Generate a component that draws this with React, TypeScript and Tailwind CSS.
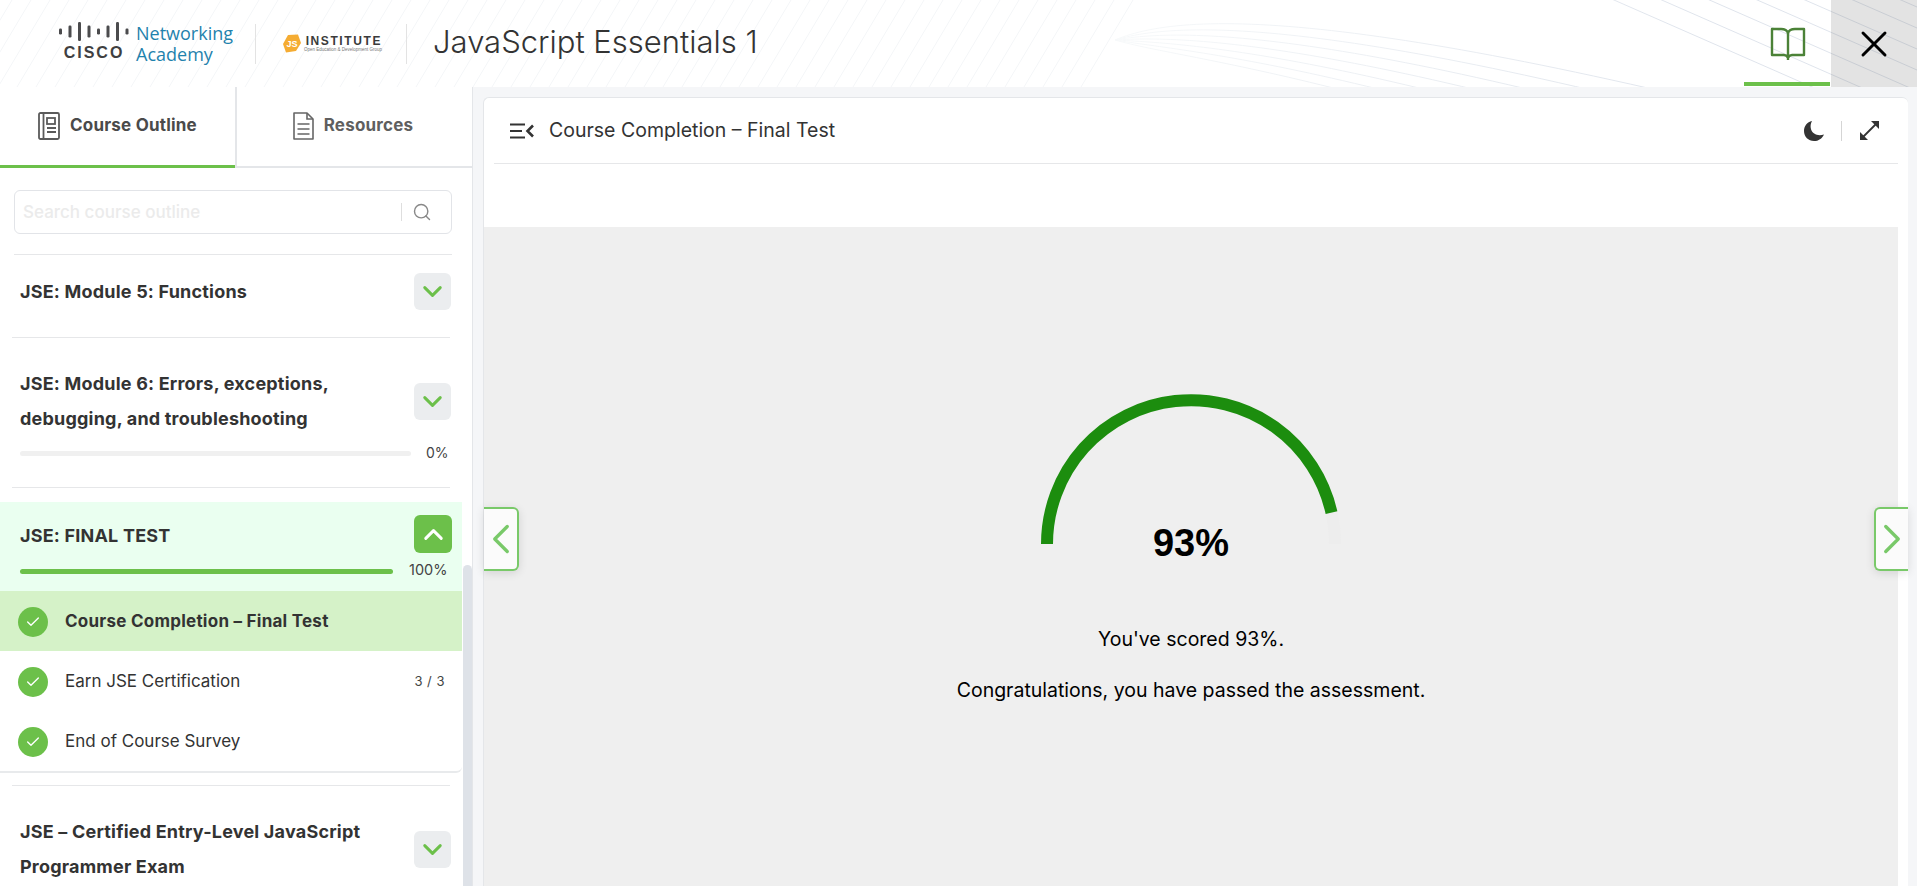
import { Check, ChevronDown, ChevronLeft, ChevronRight, ChevronUp, Search, X } from 'lucide-react';

const diagonals = Array.from({ length: 60 }, (_, i) => i * 19 - 40);
const topLines = Array.from({ length: 7 }, (_, i) => 7 + i * 21);
const arcs = Array.from({ length: 7 }, (_, i) => i);

function HeaderWaves() {
  return (
    <svg className="absolute inset-0 h-full w-full" viewBox="0 0 1917 87" fill="none">
      <defs>
        <linearGradient id="wave" gradientUnits="userSpaceOnUse" x1="1115" y1="0" x2="1700" y2="0">
          <stop offset="0" stopColor="#f7f9fa" />
          <stop offset="1" stopColor="#dfe4ec" />
        </linearGradient>
      </defs>
      {diagonals.map((x) => (
        <path key={x} d={`M${x} 87 L${x + 52} 0`} stroke="#f4f6f8" strokeWidth="1" />
      ))}
      {topLines.map((y) => (
        <path key={y} d={`M${1917 - y / 0.44 - 60} -26 L1917 ${y}`} stroke="url(#wave)" strokeWidth="1" />
      ))}
      {arcs.map((i) => (
        <path
          key={i}
          d={`M1115 40 C1190 ${8 + i * 9}, 1380 ${12 + i * 10}, 1917 ${155 + i * 21}`}
          stroke="url(#wave)"
          strokeWidth="1"
        />
      ))}
    </svg>
  );
}

function CiscoLogo() {
  const bars = [
    [0, 6],
    [9.5, 12],
    [19, 19],
    [28.5, 12],
    [38, 6],
    [47.5, 12],
    [57, 19],
    [66.5, 6],
  ];
  return (
    <div className="flex w-[72px] flex-col items-center">
      <svg width="70" height="19" viewBox="0 0 70 19" className="-mt-[5px]">
        {bars.map(([x, h]) => (
          <rect key={x} x={x} y={9.5 - h / 2} width="3" height={h} rx="1.2" fill="#4b4b4d" />
        ))}
      </svg>
      <span className="mt-[3px] font-['Liberation_Sans',sans-serif] text-[16px] leading-[17px] font-bold tracking-[2px] text-[#3f3f41]">
        CISCO
      </span>
    </div>
  );
}

function JsInstitute() {
  return (
    <div className="flex items-center">
      <svg width="18" height="19" viewBox="0 0 18 19">
        <path d="M5 1 L15 0.5 L18 9 L13 17 L3 18.5 L0 10 Z" fill="#f5ac32" />
        <text x="3.5" y="13" fontSize="9" fontWeight="700" fill="#ffffff" fontFamily="Liberation Sans, sans-serif">
          JS
        </text>
      </svg>
      <div className="ml-[3px] flex w-[78px] flex-col items-end">
        <span className="font-['Liberation_Sans',sans-serif] text-[12px] leading-[11px] font-bold tracking-[1.6px] whitespace-nowrap text-[#3b3b3b]">
          INSTITUTE
        </span>
        <span className="font-['Liberation_Sans',sans-serif] text-[4.5px] leading-[5px] whitespace-nowrap text-[#777]">
          Open Education &amp; Development Group
        </span>
      </div>
    </div>
  );
}

function Header() {
  return (
    <header className="relative flex h-[87px] shrink-0 items-center overflow-hidden bg-white">
      <HeaderWaves />
      <div className="relative flex h-full flex-1 items-center pl-[58px]">
        <CiscoLogo />
        <div className="ml-[6px] flex flex-col font-['Open_Sans',sans-serif] text-[18px] leading-[21px] text-[#1f82ad]">
          <span>Networking</span>
          <span>Academy</span>
        </div>
        <div className="ml-[22px] h-[40px] w-px bg-[#e3e3e3]" />
        <div className="ml-[27px]">
          <JsInstitute />
        </div>
        <div className="ml-[24px] h-[40px] w-px bg-[#e3e3e3]" />
        <h1 className="ml-[26px] -mt-[5px] text-[31px] leading-none font-light text-[#333]">JavaScript Essentials 1</h1>
      </div>
      <div className="relative flex h-full w-[87px] items-center justify-center">
        <svg width="36" height="34" viewBox="0 0 36 34" fill="none" stroke="#4b8237" strokeWidth="2.4">
          <path d="M2 2 H11 C14 2 17 3 18 6 C19 3 22 2 25 2 H34 V28 H22 C20 28 19 29 18 30.5 C17 29 16 28 14 28 H2 Z" strokeLinejoin="round" />
          <path d="M18 6 V33" />
        </svg>
        <div className="absolute right-[1px] bottom-[1px] left-0 h-[4px] bg-[#6cc04a]" />
      </div>
      <div className="relative flex h-full w-[86px] items-center justify-center bg-[#757575]/20">
        <X className="h-[44px] w-[44px] shrink-0 text-black" strokeWidth={1.6} />
      </div>
    </header>
  );
}

function ModuleButton({ open }: { open?: boolean }) {
  if (open) {
    return (
      <div className="flex h-[38px] w-[38px] shrink-0 items-center justify-center rounded-md bg-[#6cc04a]">
        <ChevronUp className="h-[31px] w-[31px] shrink-0 text-white" strokeWidth={2.3} />
      </div>
    );
  }
  return (
    <div className="flex h-[37px] w-[37px] shrink-0 items-center justify-center rounded-md bg-[#ebedef]">
      <ChevronDown className="h-[31px] w-[31px] shrink-0 text-[#6cc04a]" strokeWidth={2.3} />
    </div>
  );
}

function CheckBadge() {
  return (
    <div className="flex h-[30px] w-[30px] shrink-0 items-center justify-center rounded-full bg-[#6cc04a]">
      <Check className="h-[16px] w-[16px] text-white" strokeWidth={2} />
    </div>
  );
}

function OutlineItem({ label, active, count }: { label: string; active?: boolean; count?: string }) {
  return (
    <div className={`flex h-[60px] items-center pt-[2px] pr-[17px] pl-[18px] ${active ? 'bg-[#d5f2c8]' : ''}`}>
      <CheckBadge />
      <span className={`ml-[17px] flex-1 text-[17px] text-[#333] ${active ? 'font-bold tracking-[0.25px]' : ''}`}>{label}</span>
      {count && <span className="text-[13px] tracking-[0.5px] text-[#444]">{count}</span>}
    </div>
  );
}

function Sidebar() {
  return (
    <aside className="relative flex w-[473px] shrink-0 flex-col overflow-hidden border-r border-[#e4e6e9] bg-white">
      <div className="flex h-[81px] shrink-0">
        <div className="flex w-[235px] items-center justify-center gap-[10px] border-b-[3px] border-[#6cc04a] pb-[1px] text-[#4a4a4a]">
          <svg width="22" height="28" viewBox="0 0 22 28" fill="none" stroke="#5a5a5a" strokeWidth="1.8">
            <rect x="1" y="1" width="20" height="26" rx="1.5" />
            <path d="M5.5 1 V27" />
            <rect x="9" y="6" width="8" height="6" />
            <path d="M9 16 H18 M9 20 H18" />
          </svg>
          <span className="text-[17px] font-bold tracking-[0.2px]">Course Outline</span>
        </div>
        <div className="flex flex-1 items-center justify-center gap-[10px] border-b-2 border-l-2 border-[#e4e6e9] pr-[3px] pb-[1px] text-[#5f5f5f]">
          <svg width="21" height="28" viewBox="0 0 21 28" fill="none" stroke="#666" strokeWidth="1.6">
            <path d="M1 1 H14 L20 7 V27 H1 Z" strokeLinejoin="round" />
            <path d="M14 1 V7 H20 M4.5 12 H16.5 M4.5 17 H16.5 M4.5 22 H16.5" />
          </svg>
          <span className="text-[17px] font-bold tracking-[0.2px]">Resources</span>
        </div>
      </div>

      <div className="w-[462px]">
        <div className="pr-[10px] pl-[14px]">
          <div className="mt-[22px] flex h-[44px] items-center rounded-md border border-[#e2e4e8] pl-[8px]">
            <span className="mt-[2px] flex-1 text-[17px] font-medium text-[#ebebeb]">Search course outline</span>
            <div className="h-[18px] w-px bg-[#dedede]" />
            <Search className="mr-[19px] ml-[10px] h-[20px] w-[20px] text-[#888]" strokeWidth={1.7} />
          </div>
          <div className="mt-[20px] h-px bg-[#e6e7e9]" />
        </div>

        <div className="flex h-[82px] items-center justify-between pr-[11px] pb-[9px] pl-[20px]">
          <span className="text-[18px] font-bold tracking-[0.2px] text-[#333]">JSE: Module 5: Functions</span>
          <ModuleButton />
        </div>
        <div className="mr-[12px] ml-[12px] h-px bg-[#e6e7e9]" />

        <div className="h-[149px] pt-[28px] pr-[11px] pl-[20px]">
          <div className="flex items-center justify-between">
            <span className="text-[18px] leading-[35px] font-bold tracking-[0.2px] text-[#333]">
              JSE: Module 6: Errors, exceptions,
              <br />
              debugging, and troubleshooting
            </span>
            <ModuleButton />
          </div>
          <div className="mt-[6px] flex items-center">
            <div className="mt-[2px] h-[5px] w-[391px] rounded-full bg-[#f0f0f0]" />
            <span className="ml-[15px] text-[14px] text-[#444]">0%</span>
          </div>
        </div>
        <div className="mr-[12px] ml-[12px] h-px bg-[#e6e7e9]" />

        <div className="mt-[14px] rounded-br-md border-b-2 border-[#e8eaec]">
          <div className="h-[89px] bg-[#eafff0] pt-[13px] pr-[10px] pl-[20px]">
            <div className="flex items-center justify-between">
              <span className="mt-[3px] text-[18px] font-bold tracking-[0.2px] text-[#333]">JSE: FINAL TEST</span>
              <ModuleButton open />
            </div>
            <div className="mt-[6px] flex items-center">
              <div className="mt-[3px] h-[5px] w-[373px] rounded-full bg-[#6cc04a]" />
              <span className="ml-[16px] text-[14.5px] text-[#444]">100%</span>
            </div>
          </div>
          <OutlineItem label="Course Completion – Final Test" active />
          <OutlineItem label="Earn JSE Certification" count="3 / 3" />
          <OutlineItem label="End of Course Survey" />
        </div>
        <div className="mt-[12px] mr-[12px] ml-[12px] h-px bg-[#e6e7e9]" />

        <div className="flex items-center justify-between pt-[28px] pr-[11px] pl-[20px]">
          <span className="text-[18px] leading-[35px] font-bold tracking-[0.2px] text-[#333]">
            JSE – Certified Entry-Level JavaScript
            <br />
            Programmer Exam
          </span>
          <ModuleButton />
        </div>
      </div>

      <div className="absolute top-[478px] right-0 bottom-0 w-[9px] rounded-t-full bg-[#dee2e8]" />
    </aside>
  );
}

function CardHeader() {
  return (
    <div className="ml-[10px] flex h-[66px] shrink-0 items-center border-b border-[#e6e7e9] pr-[18px] pl-[16px]">
      <svg width="24" height="16" viewBox="0 0 24 16" fill="none" stroke="#333" strokeWidth="2.2">
        <path d="M0 1.5 H15 M0 8 H12 M0 14.5 H15" />
        <path d="M23 2.5 L17.5 8 L23 13.5" strokeWidth="2.6" />
      </svg>
      <span className="ml-[15px] flex-1 text-[19.5px] text-[#333]">Course Completion – Final Test</span>
      <svg width="20" height="20" viewBox="0 0 20 20">
        <path d="M8 0 C3.2 1 0 5 0 10 C0 15.8 4.4 20 10 20 C14.6 20 18 17.5 20 13.4 C14 15.5 8.5 13 7 8.2 C6.2 5.4 6.6 2.6 8 0 Z" fill="#333" />
      </svg>
      <div className="mx-[17px] h-[20px] w-px bg-[#d5d5d5]" />
      <svg width="21" height="21" viewBox="0 0 21 21" fill="none" stroke="#333" strokeWidth="1.8">
        <path d="M3 18 L18 3" />
        <path d="M12 1 H20 V9 Z M9 20 H1 V12 Z" fill="#333" stroke="none" />
      </svg>
    </div>
  );
}

function ScoreGauge() {
  return (
    <div className="relative h-[150px] w-[300px]">
      <svg width="300" height="150" viewBox="0 0 300 150" fill="none">
        <path d="M6 150 A144 144 0 0 1 294 150" stroke="#ededed" strokeWidth="12" />
        <path d="M6 150 A144 144 0 0 1 290.5 118.6" stroke="#1c8d0e" strokeWidth="12" />
      </svg>
      <span className="absolute top-[126px] left-0 w-full text-center font-['Liberation_Sans',sans-serif] text-[38px] leading-[46px] font-bold text-black">
        93%
      </span>
    </div>
  );
}

function Main() {
  return (
    <main className="min-w-0 flex-1 bg-[#f5f6f8] pt-[10px] pr-[9px] pl-[10px]">
      <div className="relative flex h-full flex-col rounded-t-md border-t border-l border-[#e4e6e9] bg-white pr-[10px]">
        <CardHeader />
        <div className="h-[63px] shrink-0" />
        <div className="flex flex-1 flex-col items-center bg-[#efefef] pt-[167px]">
          <ScoreGauge />
          <p className="mt-[83px] text-[19.5px] leading-[24px] text-black">You&apos;ve scored 93%.</p>
          <p className="mt-[27px] text-[19.5px] leading-[24px] text-black">
            Congratulations, you have passed the assessment.
          </p>
        </div>
        <div className="absolute top-[409px] left-0 flex h-[64px] w-[35px] items-center justify-center rounded-r-md border-2 border-l-0 border-[#79c969] bg-[#fbfbfb] shadow-[0_2px_10px_rgba(0,0,0,0.12)]">
          <ChevronLeft className="h-[50px] w-[50px] shrink-0 text-[#79c969]" strokeWidth={1.6} />
        </div>
        <div className="absolute top-[409px] right-0 flex h-[64px] w-[34px] items-center justify-center rounded-l-md border-2 border-r-0 border-[#79c969] bg-[#fbfbfb] shadow-[0_2px_10px_rgba(0,0,0,0.12)]">
          <ChevronRight className="h-[50px] w-[50px] shrink-0 text-[#79c969]" strokeWidth={1.6} />
        </div>
      </div>
    </main>
  );
}

export default function App() {
  return (
    <div className="flex h-screen flex-col overflow-hidden bg-[#f5f6f8] font-['Inter',sans-serif]">
      <Header />
      <div className="flex min-h-0 flex-1">
        <Sidebar />
        <Main />
      </div>
    </div>
  );
}
